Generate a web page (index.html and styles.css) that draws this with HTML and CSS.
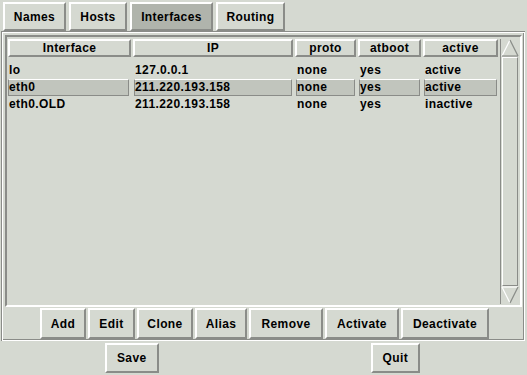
FILE: index.html
```html
<!DOCTYPE html>
<html lang="en">
<head>
  <meta charset="UTF-8" />
  <title>Network Configuration</title>
  <link rel="stylesheet" href="styles.css">
</head>
<body>
  <div class="tabs">
    <button class="tab">Names</button>
    <button class="tab">Hosts</button>
    <button class="tab selected">Interfaces</button>
    <button class="tab">Routing</button>
  </div>

  <div class="frame">
    <div class="listbox">
      <div class="table">
        <div class="head">Interface</div>
        <div class="head">IP</div>
        <div class="head">proto</div>
        <div class="head">atboot</div>
        <div class="head">active</div>

        <div class="cell">lo</div>
        <div class="cell">127.0.0.1</div>
        <div class="cell">none</div>
        <div class="cell">yes</div>
        <div class="cell">active</div>

        <div class="cell sel">eth0</div>
        <div class="cell sel">211.220.193.158</div>
        <div class="cell sel">none</div>
        <div class="cell sel">yes</div>
        <div class="cell sel">active</div>

        <div class="cell">eth0.OLD</div>
        <div class="cell">211.220.193.158</div>
        <div class="cell">none</div>
        <div class="cell">yes</div>
        <div class="cell">inactive</div>
      </div>

      <div class="scrollbar">
        <svg class="arrow" width="18" height="18" viewBox="0 0 18 18">
          <polygon points="9,1 17,17 1,17" fill="#d5d9d1" />
          <line x1="9" y1="1" x2="1" y2="17" stroke="#ffffff" stroke-width="1.2" />
          <line x1="9" y1="1" x2="17" y2="17" stroke="#8a8c88" stroke-width="1.2" />
          <line x1="1" y1="17" x2="17" y2="17" stroke="#8a8c88" stroke-width="1.2" />
        </svg>
        <div class="slider"></div>
        <svg class="arrow" width="18" height="18" viewBox="0 0 18 18">
          <polygon points="1,1 17,1 9,17" fill="#d5d9d1" />
          <line x1="1" y1="1" x2="17" y2="1" stroke="#ffffff" stroke-width="1.2" />
          <line x1="1" y1="1" x2="9" y2="17" stroke="#ffffff" stroke-width="1.2" />
          <line x1="17" y1="1" x2="9" y2="17" stroke="#8a8c88" stroke-width="1.2" />
        </svg>
      </div>
    </div>

    <div class="actions">
      <button class="btn add">Add</button>
      <button class="btn edit">Edit</button>
      <button class="btn clone">Clone</button>
      <button class="btn alias">Alias</button>
      <button class="btn remove">Remove</button>
      <button class="btn activate">Activate</button>
      <button class="btn deactivate">Deactivate</button>
    </div>
  </div>

  <div class="footer">
    <button class="btn save">Save</button>
    <button class="btn quit">Quit</button>
  </div>
</body>
</html>
```

FILE: styles.css
```css
body {
  margin: 0;
  background: #d5d9d1;
  font-family: 'Liberation Sans', Arial, sans-serif;
  font-size: 12px;
  font-weight: bold;
  letter-spacing: 0.4px;
  color: #000;
  width: 527px;
  height: 375px;
  overflow: hidden;
}

button {
  font-family: inherit;
  font-size: 12px;
  font-weight: bold;
  letter-spacing: 0.4px;
  color: #000;
  background: #d5d9d1;
  border: 2px solid;
  border-color: #ffffff #8a8c88 #8a8c88 #ffffff;
  padding: 0;
  margin: 0;
  cursor: pointer;
}

/* tab strip */
.tabs {
  display: flex;
  gap: 3px;
  padding: 2px 3px 0;
  height: 29px;
}

.tab {
  height: 29px;
}

.tab:nth-child(1) { width: 63px; }
.tab:nth-child(2) { width: 58px; }
.tab:nth-child(3) { width: 83px; }
.tab:nth-child(4) { width: 69px; }

.tab.selected {
  background: #b0b4ac;
}

/* etched frame round the list and its buttons */
.frame {
  margin: 0 2px 0 1px;
  box-shadow: inset 1px 1px 0 #8a8c88, inset 2px 2px 0 #ffffff, inset -1px -1px 0 #ffffff, inset -2px -2px 0 #8a8c88;
  padding: 4px 3px 2px 4px;
  height: 304px;
  width: 517px;
  display: flex;
  flex-direction: column;
}

.listbox {
  display: flex;
  gap: 2px;
  height: 268px;
  border: 2px solid;
  border-color: #8a8c88 #ffffff #ffffff #8a8c88;
  padding: 2px 0 1px 1px;
}

.table {
  display: grid;
  grid-template-columns: 123px 160px 61px 63px 75px;
  grid-template-rows: 23px 17px 17px 17px;
  column-gap: 2px;
  align-content: start;
}

.head {
  border: 2px solid;
  border-color: #ffffff #8a8c88 #8a8c88 #ffffff;
  text-align: center;
  line-height: 14px;
  height: 18px;
  box-sizing: border-box;
}

.cell {
  line-height: 16px;
  padding-left: 2px;
  white-space: nowrap;
}

.cell:nth-child(5n+1) {
  padding-left: 1px;
}

.cell.sel {
  background: #c1c5bd;
  border: 1px solid;
  border-color: #ffffff #8a8c88 #8a8c88 #8a8c88;
  padding-left: 0;
  margin: 0 1px;
  line-height: 15px;
}

.cell.sel:nth-child(5n+1) {
  margin-left: 0;
  margin-right: 2px;
}

/* scrollbar with nothing to scroll */
.scrollbar {
  width: 20px;
  display: flex;
  flex-direction: column;
  border-left: 1px solid #8a8c88;
  box-sizing: border-box;
  padding: 0 1px 0 0;
}

.arrow {
  display: block;
  flex: none;
}

.slider {
  flex: 1;
  margin: 0 1px;
  border: 1px solid;
  border-color: #ffffff #8a8c88 #8a8c88 #ffffff;
}

.actions {
  display: flex;
  justify-content: center;
  gap: 2px;
  margin-top: 1px;
  padding-left: 2px;
}

.btn {
  height: 31px;
}

.add { width: 46px; }
.edit { width: 47px; }
.clone { width: 56px; }
.alias { width: 52px; }
.remove { width: 74px; }
.activate { width: 74px; }
.deactivate { width: 88px; }

.footer {
  display: grid;
  grid-template-columns: 1fr 1fr;
  justify-items: center;
  padding-top: 2px;
}

.save {
  width: 54px;
  height: 30px;
}

.quit {
  width: 49px;
  height: 30px;
}
```
